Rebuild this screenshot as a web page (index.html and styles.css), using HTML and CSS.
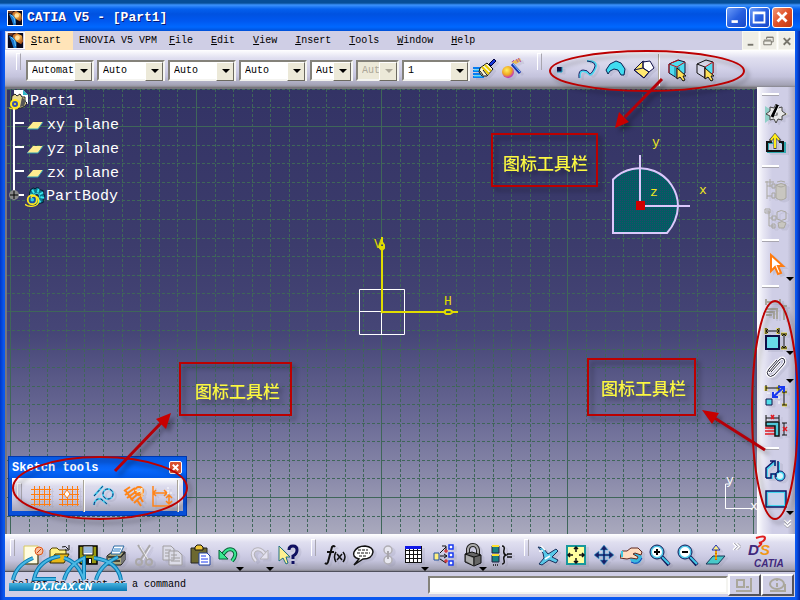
FILE: index.html
```html
<!DOCTYPE html>
<html lang="en">
<head>
<meta charset="utf-8">
<title>CATIA V5 - [Part1]</title>
<link rel="stylesheet" href="styles.css">
</head>
<body>
<svg class="defs" aria-hidden="true">
  <defs>
    <linearGradient id="fire" x1="0" y1="0" x2="1" y2="1"><stop offset="0" stop-color="#a84818"/><stop offset=".5" stop-color="#ffb848"/><stop offset="1" stop-color="#802808"/></linearGradient>
    <radialGradient id="ball" cx=".4" cy=".35" r=".65"><stop offset="0" stop-color="#fff060"/><stop offset=".6" stop-color="#f0a820"/><stop offset="1" stop-color="#c030c0"/></radialGradient>
    <linearGradient id="bluebar" x1="0" y1="0" x2="0" y2="1"><stop offset="0" stop-color="#48b4e0"/><stop offset="1" stop-color="#0878b4"/></linearGradient>
    <pattern id="dots" width="2" height="2" patternUnits="userSpaceOnUse"><rect width="2" height="2" fill="#005e62"/><rect width="1" height="1" fill="#24466c"/></pattern>
    <symbol id="app" viewBox="0 0 16 16"><rect width="16" height="16" fill="#08081c"/><path d="M0 0h6L4 3 0 2z" fill="#703820"/><path d="M5 2l4-2 6 3 1 6-2 3-5-3-4-4z" fill="url(#fire)"/><circle cx="10" cy="5" r="2.500" fill="#ffe0a0"/><path d="M1 3l5 2 3 5 0 6H6L4 10z" fill="#1878d0"/><path d="M3 4l4 4 1 6" stroke="#70d0ff" fill="none"/></symbol>
    <symbol id="gear" viewBox="0 0 22 22"><path d="M6 3l3-2 2 1 3-2 2 3 4 1v3l2 3-2 3v4l-4 1-3 2-5-2-3-5 0-6z" fill="#0c7890" stroke="#001828"/><path d="M8 3l2 4M15 2l-1 4M20 6l-4 2M21 12l-4-1M17 17l-2-3M6 8l4 2" stroke="#38e8f0" stroke-width="2"/><circle cx="13" cy="10" r="3" fill="#203050" stroke="#38e8f0"/><circle cx="8" cy="14" r="5" fill="#1850a0" stroke="#ffe820" stroke-width="2"/><path d="M8 14q-3-4 2-4t5 5-6 6-9-2" fill="none" stroke="#ffe820" stroke-width="1.500"/><circle cx="8" cy="14" r="2" fill="#30d0e0"/></symbol>
    <symbol id="chev" viewBox="0 0 8 8"><path d="M1 1l3 3-3 3M4 1l3 3-3 3" fill="none" stroke="#fff" stroke-width="1.500"/><path d="M2 1l3 3-3 3M5 1l3 3-3 3" fill="none" stroke="#8c8a94" stroke-width=".7"/></symbol>
  </defs>
</svg>

<div class="window">
  <header class="titlebar">
    <svg class="app-icon"><use href="#app"/></svg>
    <h1>CATIA V5 - [Part1]</h1>
    <button class="wbtn" aria-label="Minimize"><svg viewBox="0 0 21 21"><path d="M5 15h7" stroke="#fff" stroke-width="3"/></svg></button>
    <button class="wbtn" aria-label="Maximize"><svg viewBox="0 0 21 21"><path d="M4 5h12v11H4zM4 6h12" stroke="#fff" fill="none" stroke-width="2"/></svg></button>
    <button class="wbtn wbtn--close" aria-label="Close"><svg viewBox="0 0 21 21"><path d="M5 5l10 10M15 5L5 15" stroke="#fff" stroke-width="3"/></svg></button>
  </header>

  <nav class="menubar" aria-label="Main menu">
    <svg class="doc-icon"><use href="#app"/></svg>
    <button class="menu menu--active"><u>S</u>tart</button>
    <button class="menu menu--tight">ENOVIA V5 VPM</button>
    <button class="menu"><u>F</u>ile</button>
    <button class="menu"><u>E</u>dit</button>
    <button class="menu"><u>V</u>iew</button>
    <button class="menu"><u>I</u>nsert</button>
    <button class="menu"><u>T</u>ools</button>
    <button class="menu"><u>W</u>indow</button>
    <button class="menu"><u>H</u>elp</button>
    <span class="mdi">
      <button aria-label="Minimize document"><svg viewBox="0 0 16 16"><path d="M5 12h6" stroke="#77756c" stroke-width="2"/></svg></button>
      <button aria-label="Restore document"><svg viewBox="0 0 16 16"><path d="M6 6V4h7v5h-2M3 8h8v4H3zM3 7h8M6 4h7" stroke="#77756c" fill="none"/></svg></button>
      <button aria-label="Close document"><svg viewBox="0 0 16 16"><path d="M5 5l7 7M12 5l-7 7" stroke="#77756c" stroke-width="2"/></svg></button>
    </span>
  </nav>

  <div class="toolbar toolbar--top">
    <span class="grip"></span>
    <div class="combos">
      <label class="combo"><select aria-label="Fill colour"><option>Automat</option></select></label>
      <label class="combo"><select aria-label="Transparency"><option>Auto</option></select></label>
      <label class="combo"><select aria-label="Line thickness"><option>Auto</option></select></label>
      <label class="combo"><select aria-label="Line type"><option>Auto</option></select></label>
      <label class="combo combo--small"><select aria-label="Point symbol"><option>Aut</option></select></label>
      <label class="combo combo--small combo--off"><select aria-label="Rendering style" disabled><option>Aut</option></select></label>
      <label class="combo"><select aria-label="Layer"><option>1</option></select></label>
    </div>
    <button class="tool" aria-label="Painter"><svg viewBox="0 0 24 24"><path d="M1 10h8M1 13h9M1 16h10M1 19h11" stroke="#087cf0" stroke-width="2"/><path d="M2 12h8M2 18h9" stroke="#30e8ff"/><path d="M8 10l7-5 6 6-6 7h-5l-3-4z" fill="#f8f4d8" stroke="#111"/><path d="M10 9l7 7M13 7l6 6" stroke="#e8c800" stroke-width="2"/><path d="M11 12l4 5M8 13l3 4" stroke="#111"/><path d="M17 6l5-5 2 2-5 5z" fill="#1838d8" stroke="#000040"/></svg></button>
    <button class="tool" aria-label="Graphic properties wizard"><svg viewBox="0 0 24 24"><circle cx="8" cy="14" r="6" fill="url(#ball)"/><path d="M12 6l8 9" stroke="#1830b0" stroke-width="3"/><path d="M13 6l7 8" stroke="#80d8ff"/><path d="M11 4l9-4 1 3-5 3z" fill="#e8b850"/><path d="M12 4l2-2M16 1l2 3M18 0l3 4" stroke="#b050b0"/></svg></button>
    <span class="grip grip--wide"></span>
    <button class="tool" aria-label="Point"><svg viewBox="0 0 24 24"><path d="M9 9h5v5H9z" fill="#101048"/><path d="M14 9v5H9" stroke="#20a8c8" fill="none"/></svg></button>
    <button class="tool" aria-label="Spline"><svg viewBox="0 0 24 24"><path d="M4 20q-1-7 3-7t6 3 6-5-8-8" stroke="#48d8f0" stroke-width="2" fill="none"/><path d="M3 20q-1-8 4-8t6 3 5-4-7-8" stroke="#202068" fill="none"/></svg></button>
    <button class="tool" aria-label="Surface"><svg viewBox="0 0 24 24"><path d="M2 12l4-6 6-3 5 2 4 6-1 6h-3l-3-5-4-1-4 2-2 3z" fill="#40dcf0" stroke="#082050"/></svg></button>
    <button class="tool" aria-label="Pad"><svg viewBox="0 0 24 24"><path d="M2 12l9-9 10 6-9 11z" fill="#ffe870" stroke="#101048"/><path d="M11 4l7-1 4 7-5 4-6-4z" fill="#fff" stroke="#101048"/><path d="M2 12l9-2 6 4-5 6zM11 4v6" stroke="#101048" fill="none"/></svg></button>
    <span class="divider"></span>
    <button class="tool" aria-label="Select solid"><svg viewBox="0 0 24 24"><path d="M3 6l9-4 7 2v11l-8 5-8-5z" fill="#50dcf0" stroke="#101030"/><path d="M3 6l8 3 8-5M11 9v11M3 6v9M5 5l8-3" stroke="#c01018" fill="none"/><path d="M13 9v10M9 9v9" stroke="#087890" fill="none"/><path d="M11 10v11l3-2 3 4 2-1-2-4h3z" fill="#ffe058" stroke="#111"/></svg></button>
    <button class="tool" aria-label="Select element"><svg viewBox="0 0 24 24"><path d="M3 6l9-4 7 2v11l-8 5-8-5z" fill="#d8d8e8" stroke="#111"/><path d="M11 9l8-5v11l-8 5z" fill="#50dcf0" stroke="#c01018"/><path d="M3 6l8 3v11" stroke="#111" fill="none"/><path d="M11 10v11l3-2 3 4 2-1-2-4h3z" fill="#ffe058" stroke="#111"/></svg></button>
  </div>

  <div class="workspace">
    <main class="canvas">
      <svg class="scene" aria-label="Sketch of Part1">
        <g transform="translate(-5 -87)">
          <path class="grid" d="M29 89V535M47 89V535M66 89V535M84 89V535M103 89V535M122 89V535M140 89V535M159 89V535M177 89V535M215 89V535M233 89V535M252 89V535M270 89V535M289 89V535M307 89V535M326 89V535M345 89V535M363 89V535M400 89V535M419 89V535M437 89V535M456 89V535M474 89V535M493 89V535M511 89V535M530 89V535M549 89V535M586 89V535M605 89V535M623 89V535M642 89V535M660 89V535M679 89V535M697 89V535M716 89V535M734 89V535"/>
          <path class="grid" d="M7 89H757M7 107H757M7 145H757M7 163H757M7 182H757M7 200H757M7 219H757M7 238H757M7 256H757M7 275H757M7 293H757M7 330H757M7 349H757M7 367H757M7 386H757M7 404H757M7 423H757M7 441H757M7 460H757M7 478H757M7 516H757M7 534H757"/>
          <path class="grid grid--major" d="M10 89V535M196 89V535M381 89V535M567 89V535M753 89V535M7 126H757M7 311H757M7 497H757"/>
          <path d="M359.500 289.500h45v45h-45zM359 311.500h22M381.500 311v23" fill="none" stroke="#fff"/>
          <g stroke="#e0dc00" fill="none">
            <path d="M382 311V246M381 312H446" stroke-width="2"/><path d="M382 237v6M382 242l-2 3v3l2 2 2-2v-3zM458 312h-6M453 312l-3-2h-4l-2 2 2 2h4z" stroke-width="2"/>
            <circle cx="382" cy="312" r="1"/>
          </g>
          <g class="axis-name"><text x="374" y="248">V</text><text x="444" y="305">H</text></g>
          <path d="M613 233V179.500A38 38 0 0 1 678 206 43 43 0 0 1 667 233z" fill="url(#dots)" stroke="#dcc8fc" stroke-width="2"/>
          <path d="M640 155V206H690" stroke="#dcc8fc" stroke-width="2" fill="none"/>
          <path d="M636 201h9v9h-9z" fill="#d00000"/>
          <g class="compass"><text x="652" y="146">y</text><text x="650" y="196">z</text><text x="699" y="194">x</text></g>
          <path d="M729 484h-3.500V508.500H752" stroke="#fff" fill="none"/>
          <g class="corner-axis"><text x="726" y="484">y</text><text x="750" y="510">x</text></g>
          <path d="M14 108V190M14 123h10M14 147h10M14 171h10M14 195h10" stroke="#fff" stroke-width="2"/>
          <circle cx="14" cy="195" r="5" fill="#888"/><path d="M10 195h8M14 191v8" stroke="#000"/>
        </g>
      </svg>
      <ul class="tree">
        <li class="tree-root"><svg viewBox="0 0 22 22"><path d="M6 0h9l5 5v9H6z" fill="#fff"/><path d="M15 0v5h5z" fill="#30b8c8"/><path d="M4 6l3-2 2 2 3-2 2 3 3 0v4l2 2-2 3-4 2-5 0-5-4z" fill="#e8d890" stroke="#222"/><path d="M14 7l4 4-2 5-4 1z" fill="#555"/><circle cx="7" cy="14" r="4" fill="#3850b0" stroke="#ffe820" stroke-width="2"/><path d="M11 13q1 7-6 6l-4-1" fill="none" stroke="#ffe820"/><circle cx="7" cy="14" r="1" fill="#ffe820"/></svg>Part1</li>
        <li><svg viewBox="0 0 18 12"><path d="M1 9l6-7h10l-5 7z" fill="#ffec90"/><path d="M1 9h11l5-7" fill="none" stroke="#30a0b0"/></svg>xy plane</li>
        <li><svg viewBox="0 0 18 12"><path d="M1 9l6-7h10l-5 7z" fill="#ffec90"/><path d="M1 9h11l5-7" fill="none" stroke="#30a0b0"/></svg>yz plane</li>
        <li><svg viewBox="0 0 18 12"><path d="M1 9l6-7h10l-5 7z" fill="#ffec90"/><path d="M1 9h11l5-7" fill="none" stroke="#30a0b0"/></svg>zx plane</li>
        <li class="tree-body"><svg><use href="#gear"/></svg>PartBody</li>
      </ul>

      <section class="palette" aria-label="Sketch tools">
        <div class="palette-title"><h2>Sketch tools</h2><button aria-label="Close Sketch tools"><svg viewBox="0 0 12 12"><path d="M3 3l6 6M9 3l-6 6" stroke="#fff" stroke-width="2"/></svg></button></div>
        <div class="palette-body">
          <span class="grip"></span>
          <button class="tool" aria-label="Grid"><svg viewBox="0 0 24 24"><path class="crisp" d="M5 2v20M10 2v20M15 2v20M20 2v20M2 5h20M2 10h20M2 15h20M2 20h20" stroke="#ff7c10"/></svg></button>
          <button class="tool" aria-label="Snap to point"><svg viewBox="0 0 24 24"><path class="crisp" d="M5 2v20M10 2v20M15 2v20M20 2v20M2 5h20M2 10h20M2 15h20M2 20h20" stroke="#ff7c10"/><path d="M10 6l3 4-3 4-3-4z" fill="#fff" stroke="#ff7c10"/></svg></button>
          <span class="divider"></span>
          <button class="tool tool--wide" aria-label="Construction element"><svg viewBox="0 0 24 24"><g fill="none" stroke="#40d0f0" stroke-width="2"><path d="M2 12L11 2M2 21q1-7 7-6l6 5"/><circle cx="16" cy="10" r="5"/></g><g fill="none" stroke="#202068" stroke-dasharray="3 2"><path d="M2 12L11 2M2 21q1-7 7-6l6 5"/><circle cx="16" cy="10" r="5"/></g></svg></button>
          <button class="tool tool--wide" aria-label="Geometrical constraints"><svg viewBox="0 0 24 24"><g fill="none" stroke="#ff8418" stroke-width="2"><path d="M2 7l6-4M3 11L13 4M5 14L15 7M12 19l9-8M9 16l9-8M3 6l8 11M15 16l4 6M18 13l3 5"/><circle cx="17" cy="7" r="4"/></g><path d="M13 6l4 2 3-4v9" stroke="#fff8d0" fill="none"/></svg></button>
          <button class="tool" aria-label="Dimensional constraints"><svg viewBox="0 0 24 24"><path d="M2 2v20h19M18 11v9M2 9h14M5 6L2 9l3 3M13 6l3 3-3 3M15 14l3-3 3 3M15 17l3 3 3-3" fill="none" stroke="#ff8418" stroke-width="1.500"/><path d="M17 3v7M16 9h6" stroke="#fff" stroke-dasharray="2 1"/></svg></button>
          <span class="divider"></span>
        </div>
      </section>
    </main>

    <aside class="sidebar" aria-label="Sketcher toolbars">
      <span class="hgrip hgrip--short"></span>
      <button class="stool stool--tall" aria-label="Workbench"><svg viewBox="0 0 24 24"><path d="M1 4v17l12-9z" fill="#90d0c8"/><path d="M14 8l10 4-10 4z" fill="#dcdca8"/><path d="M12 2l2 4 4-1 0 4 4 3-4 2 0 4-4-1-2 4-2-4-4 1 0-4-4-2 4-3 0-4 4 1z" fill="#e8e8e8" stroke="#444"/><circle cx="12" cy="12" r="2" fill="#888"/><path d="M8 15l6-12" stroke="#000" stroke-width="3"/><path d="M15 4l-4 9" stroke="#fff"/></svg></button>
      <button class="stool stool--tall" aria-label="Exit workbench"><svg viewBox="0 0 24 24"><path d="M9 11H4v9h17v-9h-4" fill="none" stroke="#30a8b0" stroke-width="2"/><path d="M8 10H3v9h16V10h-4" fill="none" stroke="#111" stroke-width="2"/><path d="M11 17V4M6 9l5-6 5 6" fill="none" stroke="#444" stroke-width="3"/><path d="M11 16V4M7 8l4-5 4 5" fill="none" stroke="#ffec18" stroke-width="2"/></svg></button>
      <span class="hgrip"></span>
      <button class="stool stool--tall" aria-label="Update all" disabled><svg viewBox="0 0 24 24"><g stroke="#a9a79f" fill="none"><path d="M3 3v18M3 8h5M3 18h5M1 4h9M6 1v8M8 6h3v4H8zM8 15h3v5H8z"/><path d="M12 7q5-3 10 0v13q-5 4-10 0z" fill="#c8c6c0"/><path d="M12 7q5 4 10 0M13 4q4-2 8 0"/></g></svg></button>
      <button class="stool" aria-label="Update part" disabled><svg viewBox="0 0 24 24"><g stroke="#a9a79f" fill="none"><path d="M2 4h3v15h5M5 11h4M1 2h5v4H1zM8 9h4v4H8zM8 17h3v4H8z"/><path d="M13 5q4-3 9 0v7q-5 3-9 0z"/><path d="M14 16q4-3 8 0l-2 5h-5z" fill="#c8c6c0"/></g></svg></button>
      <span class="hgrip"></span>
      <button class="stool stool--tall stool--more" aria-label="Select"><svg viewBox="0 0 24 24"><path d="M7 3v16l4-4 3 7 3-1-3-7h5z" fill="#fff" stroke="#ff7c10" stroke-width="2"/></svg></button>
      <span class="hgrip"></span>
      <button class="stool stool--tall" aria-label="Constraint dialog" disabled><svg viewBox="0 0 24 24"><path d="M2 4h14M2 1v6M16 1v6M20 8v14M18 8h5M2 11h11v10M2 14h8v7M2 17h6" stroke="#a9a79f" stroke-width="2" fill="none"/></svg></button>
      <button class="stool stool--more" aria-label="Constraint"><svg viewBox="0 0 24 24"><path d="M2 1v6M14 1v6M17 7h6M17 21h6" stroke="#e8d840" stroke-width="3"/><path d="M2 1v6M15 1v6M2 4h13M17 7h6M17 21h6M20 7v14M4 2L2 4l2 2M13 2l2 2-2 2M18 9l2-2 2 2M18 19l2 2 2-2" fill="none" stroke="#111"/><path d="M2 9h13v13H2z" fill="#68dce8" stroke="#101048" stroke-width="2"/></svg></button>
      <button class="stool stool--more" aria-label="Fix together"><svg viewBox="0 0 24 24"><path d="M5 17L15 5q3-3 5-1 2 3-1 6l-9 10q-4 3-6 0-2-2 1-6l8-9M7 17l9-10" fill="none" stroke="#fff" stroke-width="3"/><path d="M5 17L15 5q3-3 5-1 2 3-1 6l-9 10q-4 3-6 0-2-2 1-6l8-9M7 17l9-10" fill="none" stroke="#28283c"/></svg></button>
      <button class="stool stool--tall" aria-label="Animate constraint"><svg viewBox="0 0 24 24"><path d="M2 2v5M14 2v5M18 8h5M18 21h5" stroke="#e8d840" stroke-width="3"/><path d="M2 4h13M2 1v6M15 1v6M18 8h5M18 21h5M20 8v13" stroke="#111" fill="none"/><path d="M3 9h12v12" stroke="#fff" stroke-dasharray="3 2" fill="none"/><path d="M2 15h6v6H2z" fill="#50dce8" stroke="#101048"/><path d="M9 13l11-10M14 3h6v5M9 8v5h5" stroke="#1838f0" stroke-width="2" fill="none"/></svg></button>
      <button class="stool stool--tall" aria-label="Edit multi-constraint"><svg viewBox="0 0 24 24"><path d="M2 4h13M2 1v6M15 1v6M20 9v12M18 9h5M18 21h5" stroke="#111"/><path d="M7 1l3 4M10 1L7 5M19 13l4 4M23 13l-4 4M1 14h10M1 17h10M1 20h10" stroke="#e01820" stroke-width="1.500"/><path d="M2 8h13v14h-4V12H2z" fill="#50c8d8" stroke="#111" stroke-width="1.500"/></svg></button>
      <span class="hgrip"></span>
      <button class="stool" aria-label="Profile"><svg viewBox="0 0 24 24"><path d="M3 19V10l8-7v4M3 19h5v-4h4M15 3v11" fill="none" stroke="#48d8f0" stroke-width="2"/><circle cx="16" cy="17" r="4" fill="#d8f4fc" stroke="#48d8f0" stroke-width="2"/><path d="M2 19V9l8-7M6 2h5v5M2 19h5v-4h5v3M14 2v12" fill="none" stroke="#101868" stroke-width="1.500"/><circle cx="16" cy="17" r="5" fill="none" stroke="#101868"/></svg></button>
      <button class="stool stool--more" aria-label="Rectangle"><svg viewBox="0 0 24 24"><path d="M3 5h18v14H3z" fill="#c8d4ec" stroke="#48d8f0" stroke-width="2"/><path d="M2 4h20v16H2z" fill="none" stroke="#101868" stroke-width="1.500"/></svg></button>
      <svg class="more-down"><use href="#chev"/></svg>
    </aside>
  </div>

  <div class="toolbar toolbar--bottom">
    <span class="grip"></span>
    <button class="tool" aria-label="New"><svg viewBox="0 0 24 24"><path d="M4 3h14v18H4z" fill="#fffce0" stroke="#d8c860"/><path d="M5 21h13V11" stroke="#222" fill="none"/><circle cx="19" cy="8" r="4" fill="#f8c0a0" stroke="#e05818"/><path d="M17 10l4-4" stroke="#c04010"/></svg></button>
    <button class="tool" aria-label="Open"><svg viewBox="0 0 24 24"><path d="M2 20V7l2-2h5l2 2h7v4" fill="#fff080" stroke="#554400"/><path d="M2 20l5-9h14l-5 9z" fill="#e8b818" stroke="#332800"/><path d="M14 4q4-2 6 2M21 2v5h-4" fill="none" stroke="#111"/></svg></button>
    <button class="tool" aria-label="Save"><svg viewBox="0 0 24 24"><path d="M3 3h18v18H5l-2-2z" fill="#9a9a10" stroke="#000" stroke-width="1.500"/><path d="M7 3h10v9H7z" fill="#fff" stroke="#111"/><path d="M8 5h8M8 7h8M8 9h8" stroke="#3878c0"/><path d="M8 15h8v6H8z" fill="#111"/><path d="M13 16h2v4h-2z" fill="#fff"/></svg></button>
    <button class="tool" aria-label="Print"><svg viewBox="0 0 24 24"><path d="M3 13l5-4h13v8l-4 5H3z" fill="#aaa880" stroke="#111"/><path d="M7 11l3-8h10l-4 8z" fill="#fff" stroke="#2868a0"/><path d="M10 6h7M9 8h7" stroke="#2078c8"/><path d="M4 14h13l4-5M4 18h12" stroke="#222" stroke-width="1.500" fill="none"/><path d="M17 15l4-4v6l-4 4z" fill="#777"/></svg></button>
    <button class="tool" aria-label="Cut" disabled><svg viewBox="0 0 24 24"><g stroke="#aaa8a8" fill="none" stroke-width="2"><path d="M6 2l9 14M18 2L9 16"/><circle cx="7" cy="19" r="3"/><circle cx="17" cy="19" r="3"/></g><path d="M8 3l8 13M18 5l-7 12" stroke="#fff" stroke-width=".7"/></svg></button>
    <button class="tool" aria-label="Copy" disabled><svg viewBox="0 0 24 24"><path d="M3 3h8l3 3v11H3zM9 8h9l4 4v10H9z" fill="#dcdce8" stroke="#a09ea0"/><path d="M5 7h6M5 10h4M5 13h4M11 12h6M11 15h9M11 18h9" stroke="#a09ea0"/></svg></button>
    <button class="tool" aria-label="Paste"><svg viewBox="0 0 24 24"><path d="M3 5h16v15H3z" fill="#6c6830" stroke="#222"/><path d="M7 7V4l2-2h4l2 2v3z" fill="#f0c838" stroke="#111"/><path d="M11 10h8l3 3v9H11z" fill="#fff" stroke="#2040a0"/><path d="M13 13h5M13 16h7M13 19h7" stroke="#1838f0"/></svg></button>
    <button class="tool tool--wide tool--more" aria-label="Undo"><svg viewBox="0 0 24 24"><path d="M5 13q5-9 11-6 5 4-1 11" fill="none" stroke="#086038" stroke-width="4"/><path d="M5 13q5-9 11-6 5 4-1 11" fill="none" stroke="#38e890" stroke-width="2"/><path d="M2 7v9h9z" fill="#38e890" stroke="#086038"/></svg></button>
    <button class="tool tool--wide tool--more" aria-label="Redo" disabled><svg viewBox="0 0 24 24"><path d="M19 13q-5-9-11-6-5 4 1 11" fill="none" stroke="#b5b3b8" stroke-width="4"/><path d="M19 13q-5-9-11-6-5 4 1 11" fill="none" stroke="#e4e2f0" stroke-width="2"/><path d="M21 7v9h-8z" fill="#e4e2f0" stroke="#b5b3b8"/></svg></button>
    <button class="tool" aria-label="What's this?"><svg viewBox="0 0 24 24"><path d="M3 3v15l4-3 3 6 2-1-2-6h4z" fill="#fff090" stroke="#207080"/><path d="M13 7q0-4 4-4t4 4-4 6v3M17 18v3" stroke="#101060" stroke-width="3" fill="none"/></svg></button>
    <span class="grip grip--mid"></span>
    <button class="tool" aria-label="Formula"><svg viewBox="0 0 24 24"><path d="M12 4q-1-2-3 0L5 19q-1 3-3 1M4 9h7" fill="none" stroke="#111" stroke-width="2"/><path d="M13 9q-3 5 0 10M20 9q4 5 0 10M14 11l5 6M19 11l-5 6" fill="none" stroke="#111" stroke-width="1.500"/></svg></button>
    <button class="tool" aria-label="Comment"><svg viewBox="0 0 24 24"><path d="M8 16q-7-2-5-7 3-6 11-6 8 1 8 6-1 7-10 7l-9 6z" fill="#fff" stroke="#111" stroke-width="1.500"/><path d="M7 7h10M6 10h13M8 13h8" stroke="#111" stroke-dasharray="3 1"/></svg></button>
    <button class="tool tool--narrow" aria-label="Link" disabled><svg viewBox="0 0 24 24"><g fill="#e8e8f0" stroke="#b0aeb4" stroke-width="1.500"><circle cx="12" cy="7" r="4"/><circle cx="12" cy="17" r="4"/></g><path d="M12 8v8" stroke="#a8a6ac" stroke-width="2"/></svg></button>
    <button class="tool tool--wide tool--more" aria-label="Design table"><svg viewBox="0 0 24 24"><g class="crisp"><path d="M3 3h16v16H3z" fill="#fff" stroke="#111"/><path d="M3 7h16M3 11h16M3 15h16M7 3v16M11 3v16M15 3v16" stroke="#111"/><path d="M3 3h16v3H3z" fill="#1018e8"/></g></svg></button>
    <button class="tool tool--wide" aria-label="Relations"><svg viewBox="0 0 24 24"><path d="M2 10h5v7H2z" fill="#fff080" stroke="#2050a0"/><path d="M17 2h4v4h-4zM17 10h4v4h-4zM17 18h4v4h-4z" fill="#fff" stroke="#1838f0" stroke-width="1.500"/><path d="M8 10l6-6M8 13h7M8 16l6 4M10 3h4v4M12 11l3 2-3 2" stroke="#111" fill="none"/><path d="M12 8h4M14 6v4M12 18h4M14 16v4" stroke="#d01010"/></svg></button>
    <button class="tool tool--more" aria-label="Lock"><svg viewBox="0 0 24 24"><path d="M7 11V6q1-4 5-4t5 5v5" fill="none" stroke="#222" stroke-width="4"/><path d="M7 11V6q1-4 5-4t5 5v5" fill="none" stroke="#aaa" stroke-width="2"/><path d="M4 11l7-2 9 3v8l-7 3-9-4z" fill="#666" stroke="#111"/><path d="M4 11l9 3 7-2M13 14v8" stroke="#111" fill="none"/><path d="M5 12l7 3v7l-7-4z" fill="#aaa"/></svg></button>
    <button class="tool" aria-label="Law"><svg viewBox="0 0 24 24"><path d="M3 3h7v7H3zM3 12h7v7H3z" fill="#188080" stroke="#224"/><path d="M3 3h7M3 12h7" stroke="#ffe030" stroke-width="2"/><path d="M4 22h6" stroke="#111" stroke-width="1.500" stroke-dasharray="1 1"/><path d="M13 3q3 0 2 4t2 5q-3 1-2 5t-2 4M18 11h5M18 14h5" stroke="#111" fill="none" stroke-width="1.500"/></svg></button>
    <span class="grip grip--mid"></span>
    <button class="tool" aria-label="Fly mode"><svg viewBox="0 0 24 24"><path d="M2 4l5 1 5 6 8-5 2 2-6 6 6 3-2 3-7-3-7 5-3-1 5-6-1-5z" fill="#58c8e8" stroke="#18305c"/><path d="M3 8l4 0M5 3l4 4M9 16l5-3" stroke="#fff" stroke-width="1.500"/></svg></button>
    <button class="tool" aria-label="Fit all in"><svg viewBox="0 0 24 24"><path d="M3 3h18v18H3z" fill="#ffffa0" stroke="#18989c" stroke-width="2"/><path d="M12 9V4M12 15v5M9 12H4M15 12h5M10 6l2-2 2 2M10 18l2 2 2-2M6 10l-2 2 2 2M18 10l2 2-2 2" stroke="#111" fill="none" stroke-width="1.500"/></svg></button>
    <button class="tool" aria-label="Pan"><svg viewBox="0 0 24 24"><path d="M12 2l4 5h-3v4h4V8l5 4-5 4v-3h-4v4h3l-4 5-4-5h3v-4H7v3l-5-4 5-4v3h4V7H8z" fill="#182068" stroke="#40b0d8" stroke-width=".6"/></svg></button>
    <button class="tool" aria-label="Rotate"><svg viewBox="0 0 24 24"><circle cx="16" cy="15" r="6" fill="#38b8e0"/><path d="M2 8h5l4-3h7l4 4-1 3-6-2-2 1 5 3-1 2-6-1-4 1-7-1z" fill="#ffdcc0" stroke="#602820"/><path d="M2 8v6" stroke="#40c8e0" stroke-width="2"/><path d="M11 19q7 4 11-4" stroke="#1838b0" fill="none"/></svg></button>
    <button class="tool" aria-label="Zoom in"><svg viewBox="0 0 24 24"><path d="M14 14l7 8" stroke="#101858" stroke-width="4"/><path d="M14 14l7 7" stroke="#40c8e8" stroke-width="2"/><circle cx="9" cy="9" r="6" fill="#fff" stroke="#50c8e8" stroke-width="2"/><circle cx="9" cy="9" r="7" fill="none" stroke="#101858"/><path d="M6 9h6M9 6v6" stroke="#000" stroke-width="2"/></svg></button>
    <button class="tool" aria-label="Zoom out"><svg viewBox="0 0 24 24"><path d="M14 14l7 8" stroke="#101858" stroke-width="4"/><path d="M14 14l7 7" stroke="#40c8e8" stroke-width="2"/><circle cx="9" cy="9" r="6" fill="#fff" stroke="#50c8e8" stroke-width="2"/><circle cx="9" cy="9" r="7" fill="none" stroke="#101858"/><path d="M6 9h6" stroke="#000" stroke-width="2"/></svg></button>
    <button class="tool" aria-label="Normal view"><svg viewBox="0 0 24 24"><path d="M2 21l7-8h12l-7 8z" fill="#48c8c8" stroke="#183858"/><path d="M12 17V4" stroke="#e8a800" stroke-width="2"/><path d="M12 17V7" stroke="#d02010" stroke-dasharray="1 2"/><path d="M8 7l4-5 4 5z" fill="#fff080" stroke="#2030b0"/></svg></button>
    <svg class="more-right"><use href="#chev"/></svg>
    <svg class="brand" viewBox="0 0 44 34" role="img" aria-label="3DS CATIA"><path d="M10 3q9-3 9 0t-6 5q5 0-1 4" fill="none" stroke="#e02020" stroke-width="2"/><text x="2" y="20" class="brand-d">D</text><text x="14" y="20" class="brand-s">S</text><text x="8" y="32" class="brand-name">CATIA</text></svg>
  </div>

  <footer class="status">
    <label for="power">Select an object or a command</label>
    <input id="power" type="text">
    <button aria-label="Power input options"><svg viewBox="0 0 24 18"><path d="M4 4h7v7H4zM13 11h3M3 15h15V2" fill="none" stroke="#aaa79c" stroke-width="2"/></svg></button>
    <button aria-label="Information"><svg viewBox="0 0 24 18"><ellipse cx="11" cy="8" rx="7" ry="5" fill="none" stroke="#aaa79c" stroke-width="2"/><path d="M11 7v4M11 4v1M4 15h15V8" fill="none" stroke="#aaa79c" stroke-width="2"/></svg></button>
  </footer>

  <svg class="watermark" viewBox="0 0 120 38" role="img" aria-label="DX.ICAX.CN">
    <g fill="none" stroke="#0878b0" stroke-width="4"><path d="M5 25Q8 10 25 3M52 1Q30 5 26 24H48M56 25Q60 10 76 3V24M56 3q14 4 20 22M88 25Q92 10 110 2M86 3q24 3 27 22"/></g>
    <g fill="none" stroke="#48b8e4" stroke-width="2"><path d="M5 25Q8 10 25 3M52 1Q30 5 26 24H48M56 25Q60 10 76 3V24M56 3q14 4 20 22M88 25Q92 10 110 2M86 3q24 3 27 22"/></g>
    <path d="M1 28h118v8H1z" fill="url(#bluebar)"/>
    <text x="25" y="35">DX.ICAX.CN</text>
  </svg>

  <svg class="notes" aria-label="Annotations">
    <g fill="none" stroke="#bc0000" stroke-width="2">
      <ellipse cx="647" cy="71" rx="97" ry="20"/><ellipse cx="775" cy="410" rx="23" ry="109"/><ellipse cx="100" cy="488" rx="87" ry="31"/>
      <path d="M492 134h105v52H492zM588 359h107v56H588zM180 363h111v52H180z"/>
    </g>
    <path d="M662 79L625 117M765 450L713 417M115 471L161 423" stroke="#b40008" stroke-width="3"/>
    <path d="M615 128l4-16 10 10zM702 410l17 3-7 11zM171 413l-5 16-10-10z" fill="#c80000"/>
    <g class="note-text"><text x="503" y="170">图标工具栏</text><text x="601" y="395">图标工具栏</text><text x="195" y="398">图标工具栏</text></g>
  </svg>
</div>
</body>
</html>
```
FILE: styles.css
```css
* { box-sizing: border-box; }

body {
  margin: 0;
  color: #000;
  font: 10px/12px "Liberation Mono", "Noto Sans CJK SC", monospace;
}

button {
  margin: 0;
  padding: 0;
  border: 0;
  background: none;
  font: inherit;
  color: inherit;
}

svg { display: block; flex: none; }
.defs { position: absolute; width: 0; height: 0; }
.crisp { shape-rendering: crispEdges; }

.window {
  position: relative;
  display: flex;
  flex-direction: column;
  height: 100vh;
  padding: 0 5px 3px;
  overflow: hidden;
  background: linear-gradient(90deg, #0036c8, #0a58f0 4px, #0a58f0 calc(100% - 4px), #0028a8);
}

/* Title bar */
.titlebar {
  display: flex;
  align-items: center;
  gap: 2px;
  height: 31px;
  margin: 0 -5px;
  padding: 4px 7px 0;
  background: linear-gradient(#064e98 0, #064e98 3px, #3c92fc 5px, #0460ee 9px, #0052e0 14px, #0058f0 21px, #0068ff 27px, #0050d8 31px);
}
.app-icon { width: 16px; height: 16px; border: 1px solid #fff; }
.titlebar h1 {
  flex: 1;
  margin: 0 0 0 2px;
  color: #fff;
  font-size: 13px;
  line-height: 16px;
  text-shadow: 1px 1px 0 #0a1878;
}
.wbtn {
  width: 21px;
  height: 21px;
  border: 1px solid #fff;
  border-radius: 3px;
  background: linear-gradient(135deg, #6c9cf8, #2860e0 50%, #1848c8);
}
.wbtn--close { background: linear-gradient(135deg, #f09878, #e05028 50%, #c03810); }

/* Menu bar */
.menubar {
  display: flex;
  height: 19px;
  background: #cfcee5;
}
.doc-icon { width: 19px; height: 17px; margin: 1px 0 0 1px; border: 1px solid #fff; }
.menu { padding: 1px 12px 0 6px; }
.menu--active { background: #ffe4b8; }
.menu--tight { padding-right: 6px; }
.mdi { display: flex; gap: 1px; margin-left: auto; background: #fff; }
.mdi button { width: 17px; background: #efeee6; border: 1px solid #f8f8f0; }
.mdi svg { width: 15px; height: 16px; }

/* Toolbars */
.toolbar {
  display: flex;
  flex: none;
  align-items: center;
  background: linear-gradient(#fff, #e0dff0 22%, #cfcee6 55%, #c4c3dc 72%, #a3a2b4 95%, #86858c);
}
.toolbar--top { height: 37px; padding: 3px 0 0 10px; }
.toolbar--bottom { height: 38px; padding: 5px 5px 0 4px; border-bottom: 1px solid #50505c; }
.grip { flex: none; width: 11px; height: 100%; padding: 0 0 20px 1px; }
.grip::before {
  content: "";
  display: block;
  width: 3px;
  height: 16px;
  border: solid #fff;
  border-width: 1px 1px 0 1px;
  border-right-color: #a8a6b0;
}
.toolbar--bottom .grip { width: 9px; }
.toolbar--top .grip--wide { width: 20px; padding-left: 11px; }
.toolbar--bottom .grip--mid { width: 19px; padding-left: 9px; }
.divider {
  flex: none;
  width: 2px;
  height: 32px;
  margin-right: 4px;
  background: #fff;
  border-left: 1px solid #a8a498;
}
.combos { display: flex; gap: 3px; }
.combo { position: relative; display: block; width: 68px; }
.combo--small { width: 43px; }
.combo select {
  display: block;
  width: 100%;
  height: 21px;
  padding: 1px 0 0 4px;
  appearance: none;
  border: 2px solid;
  border-color: #84827a #f4f4f0 #f4f4f0 #84827a;
  border-radius: 0;
  background: #fff;
  color: #000;
  font: inherit;
}
.combo::before {
  content: "";
  position: absolute;
  top: 2px;
  right: 2px;
  width: 16px;
  height: 17px;
  border: 1px solid;
  border-color: #fff #6c6a60 #6c6a60 #fff;
  background: #ece9d8;
  pointer-events: none;
}
.combo::after {
  content: "";
  position: absolute;
  top: 9px;
  right: 6px;
  border: 4px solid transparent;
  border-top-color: #000;
  border-bottom: 0;
  pointer-events: none;
}
.combo--off select { background: #ece9d8; color: #aca899; opacity: 1; }
.combo--off::after { border-top-color: #aca899; }

.tool {
  position: relative;
  display: flex;
  flex: none;
  align-items: center;
  justify-content: center;
  width: 28px;
  height: 28px;
}
.tool--wide { width: 30px; }
.tool--narrow { width: 22px; }
.tool svg, .stool svg { width: 24px; height: 24px; filter: drop-shadow(3px 2px 0 rgba(120, 120, 140, .14)); }
.tool--more::after, .stool--more::after {
  content: "";
  position: absolute;
  right: 0;
  bottom: -2px;
  border: 4px solid transparent;
  border-top-color: #000;
  border-bottom: 0;
}
.more-right { width: 9px; height: 9px; margin: 0 0 18px 2px; }
.brand { width: 44px; height: 34px; margin: -6px 0 0 auto; }
.brand text { font-family: "Liberation Sans", sans-serif; font-style: italic; font-weight: bold; }
.brand .brand-d { fill: #40287c; font-size: 15px; }
.brand .brand-s { fill: #f09818; font-size: 15px; }
.brand .brand-name { fill: #40287c; font-size: 10px; }

/* Work area */
.workspace { display: flex; flex: 1; min-height: 0; }
.canvas {
  position: relative;
  flex: 1;
  min-width: 0;
  overflow: hidden;
  border-top: 2px solid #77757c;
  border-left: 2px solid #77757c;
  background: linear-gradient(#333365, #3c3c6c 35%, #464677 55%, #6c6c97 75%, #a9a9bd);
}
.scene { position: absolute; top: -2px; left: -2px; width: 100%; height: 100%; overflow: visible; }
.grid { fill: none; stroke: #3f6659; stroke-dasharray: 3 2; shape-rendering: crispEdges; }
.grid--major { stroke-dasharray: none; }
.scene text { font-family: "Liberation Mono", monospace; }
.axis-name { fill: #e0dc00; font-size: 13px; }
.compass { fill: #f0e820; font-size: 13px; }
.corner-axis { fill: #fff; font-size: 13px; }

.tree {
  position: absolute;
  top: 1px;
  left: 1px;
  margin: 0;
  padding: 0;
  list-style: none;
  color: #fff;
  font-size: 15px;
  line-height: 24px;
}
.tree li { display: flex; align-items: center; height: 24px; padding-left: 18px; }
.tree li svg { width: 18px; height: 12px; margin-right: 3px; }
.tree .tree-root { padding-left: 0; }
.tree .tree-root svg { width: 22px; height: 22px; margin: -2px 0 0; }
.tree .tree-body { height: 22px; padding-left: 17px; }
.tree .tree-body svg { width: 20px; height: 20px; margin-right: 1px; }

.palette {
  position: absolute;
  left: 1px;
  bottom: 18px;
  padding: 0 3px 4px;
  background: #0850d8;
  border: 1px solid #0038b0;
}
.palette-title {
  display: flex;
  align-items: center;
  justify-content: space-between;
  height: 21px;
  margin: 0 -3px;
  padding: 0 4px 0 3px;
  background: linear-gradient(#0858e0, #0868fc 60%, #0058e8);
}
.palette-title h2 { margin: 0; color: #fff; font-size: 12px; line-height: 14px; }
.palette-title button { width: 13px; height: 13px; border: 1px solid #fff; border-radius: 2px; background: #d85030; }
.palette-title svg { width: 11px; height: 11px; }
.palette-body {
  display: flex;
  align-items: center;
  height: 33px;
  padding: 2px 0 0 4px;
  background: linear-gradient(#fff, #dcdbec 25%, #cfcee6 60%, #a8a7b8);
}
.palette-body .grip::before { margin-top: 3px; }

/* Side toolbar */
.sidebar {
  display: flex;
  flex: none;
  flex-direction: column;
  align-items: center;
  width: 38px;
  background: linear-gradient(90deg, #fff, #e8e7f4 16%, #cfcee6 40%, #cfcee6 80%, #a8a7bc);
}
.hgrip { flex: none; width: 100%; height: 16px; padding: 6px 0 0 5px; }
.hgrip::before {
  content: "";
  display: block;
  width: 17px;
  height: 2px;
  background: #fff;
  border-bottom: 1px solid #a8a6b0;
}
.hgrip--short { height: 12px; }
.stool {
  position: relative;
  display: flex;
  flex: none;
  align-items: center;
  justify-content: center;
  width: 36px;
  height: 28px;
}
.stool--tall { height: 30px; }
.more-down { width: 9px; height: 9px; margin: 6px 0 0 22px; transform: rotate(90deg); }

/* Status bar */
.status {
  display: flex;
  flex: none;
  align-items: center;
  height: 25px;
  padding: 0 1px 0 7px;
  background: #cfcee5;
}
.status label { flex: 1; }
.status input {
  flex: 0 1 300px;
  min-width: 0;
  height: 18px;
  padding: 0 3px;
  border: 2px solid;
  border-color: #84827a #f4f4f0 #f4f4f0 #84827a;
  background: #fff;
  font: inherit;
}
.status button {
  width: 33px;
  height: 22px;
  border: 2px solid;
  border-color: #fff #55535a #55535a #fff;
}
.status button svg { width: 24px; height: 18px; margin: 0 auto; }

/* Layers over the window */
.watermark { position: absolute; left: 8px; bottom: 7px; width: 120px; height: 38px; }
.watermark text { fill: #fff; font: italic bold 9px "DejaVu Sans", sans-serif; }
.notes {
  position: absolute;
  top: 0;
  left: 0;
  width: 100%;
  height: 100%;
  pointer-events: none;
  filter: drop-shadow(4px 4px 2px rgba(0, 0, 0, .3));
}
.note-text text { fill: #fcf840; font: 500 17px "Noto Sans CJK SC", sans-serif; }
```
